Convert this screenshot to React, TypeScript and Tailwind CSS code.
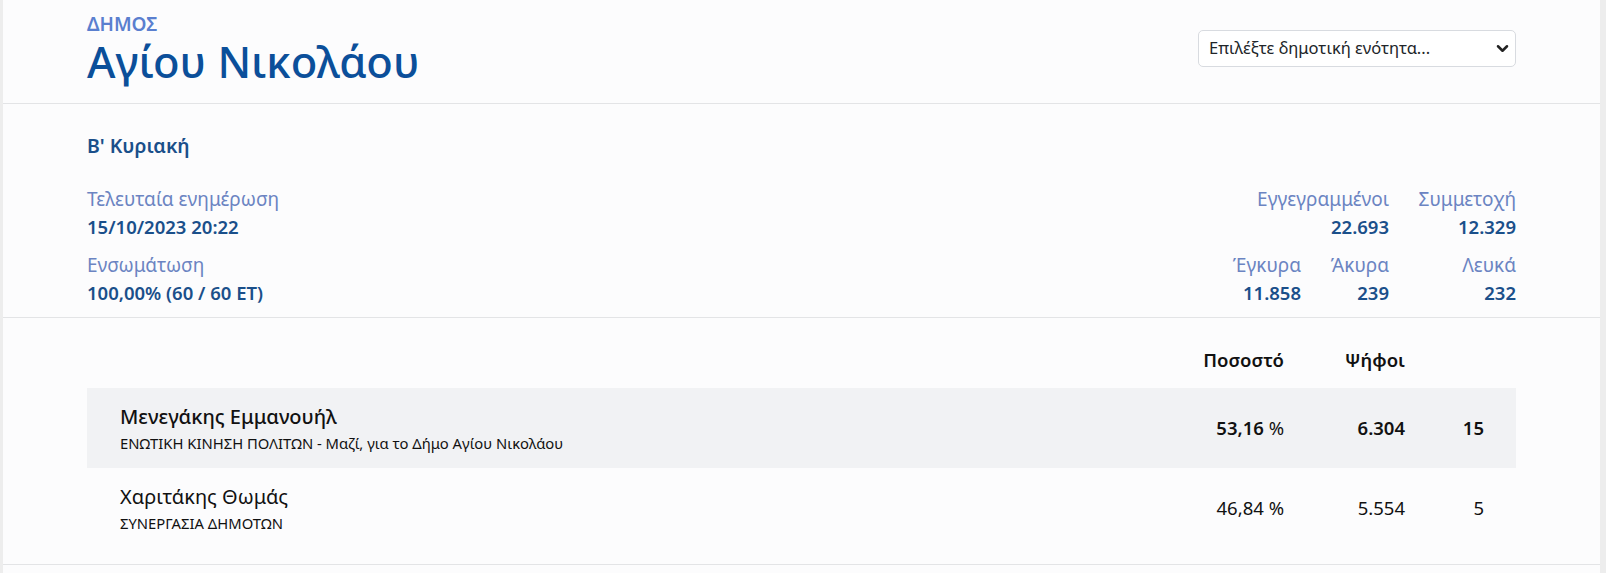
import React from "react"

const stats = [
  { label: "Έγκυρα", value: "11.858" },
  { label: "Άκυρα", value: "239" },
  { label: "Λευκά", value: "232" },
]

const candidates = [
  { name: "Μενεγάκης Εμμανουήλ", party: "ΕΝΩΤΙΚΗ ΚΙΝΗΣΗ ΠΟΛΙΤΩΝ - Μαζί, για το Δήμο Αγίου Νικολάου", pct: "53,16", votes: "6.304", seats: "15", winner: true },
  { name: "Χαριτάκης Θωμάς", party: "ΣΥΝΕΡΓΑΣΙΑ ΔΗΜΟΤΩΝ", pct: "46,84", votes: "5.554", seats: "5", winner: false },
]

const Stat = ({ label, value }: { label: string; value: string }) => (
  <div>
    <div className="text-[19px] leading-[28px] text-[#6b84c2]">{label}</div>
    <div className="text-[18.5px] leading-[27px] font-semibold text-[#1a4f8a]">{value}</div>
  </div>
)

const App = () => {
  return (
    <div className="min-h-[573px] bg-[#ededed] pl-[3px] pr-[6px] font-['Noto_Sans',sans-serif]">
      <div className="bg-[#fcfcfd] min-h-[573px]">
        {/* header */}
        <div className="h-[104px] border-b border-[#e3e4e6] flex items-start justify-between pl-[84px] pr-[84px]">
          <div className="pt-[14px]">
            <div className="text-[19px] leading-[20px] font-semibold text-[#5a7fcf]">ΔΗΜΟΣ</div>
            <div className="text-[43.5px] leading-[50px] font-medium text-[#0b4f9a] mt-[2px]">Αγίου Νικολάου</div>
          </div>
          <div className="relative mt-[30px] w-[318px] h-[37px]">
            <select className="appearance-none w-full h-full border border-[#d8dbe0] rounded-[5px] bg-white pl-[10px] pr-8 text-[16.5px] text-[#212529] outline-none">
              <option>Επιλέξτε δημοτική ενότητα...</option>
            </select>
            <svg className="absolute right-[7px] top-[14px] pointer-events-none" width="13" height="9" viewBox="0 0 14 10">
              <path d="M2 2.5l5 5 5-5" fill="none" stroke="#222" strokeWidth="2.8" strokeLinecap="round" strokeLinejoin="round" />
            </svg>
          </div>
        </div>

        {/* summary */}
        <div className="h-[214px] border-b border-[#e3e4e6] pl-[84px] pr-[84px] pt-[29px]">
          <div className="text-[19.5px] leading-[26px] font-semibold text-[#1a4f8a]">Β' Κυριακή</div>
          <div className="flex justify-between mt-[26px]">
            <div className="flex flex-col gap-[11px]">
              <Stat label="Τελευταία ενημέρωση" value="15/10/2023 20:22" />
              <Stat label="Ενσωμάτωση" value="100,00% (60 / 60 ΕΤ)" />
            </div>
            <div className="grid grid-cols-[auto_88px_127px] gap-y-[11px] text-right">
              <div className="col-span-2">
                <Stat label="Εγγεγραμμένοι" value="22.693" />
              </div>
              <Stat label="Συμμετοχή" value="12.329" />
              {stats.map((s) => (
                <Stat key={s.label} label={s.label} value={s.value} />
              ))}
            </div>
          </div>
        </div>

        {/* results */}
        <div className="border-b border-[#e3e4e6] pl-[84px] pr-[84px] pt-[28px] pb-[16px]">
          <div className="grid grid-cols-[1fr_140px_121px_79px] pr-[32px] h-[42px] text-[18.5px] font-semibold text-[#111]">
            <div></div>
            <div className="text-right">Ποσοστό</div>
            <div className="text-right">Ψήφοι</div>
            <div></div>
          </div>
          {candidates.map((c) => (
            <div
              key={c.name}
              className={`grid grid-cols-[1fr_140px_121px_79px] items-center pl-[33px] pr-[32px] h-[80px] ${c.winner ? "bg-[#f1f2f4]" : ""}`}
            >
              <div>
                <div className={`text-[20px] leading-[26px] text-[#111] ${c.winner ? "font-medium" : ""}`}>{c.name}</div>
                <div className="text-[14.8px] leading-[20px] text-[#111] mt-[3px]">{c.party}</div>
              </div>
              <div className={`text-right text-[18.5px] text-[#111] ${c.winner ? "font-semibold" : ""}`}>
                {c.pct} <span className="font-normal">%</span>
              </div>
              <div className={`text-right text-[18.5px] text-[#111] ${c.winner ? "font-semibold" : ""}`}>{c.votes}</div>
              <div className={`text-right text-[18.5px] text-[#111] ${c.winner ? "font-semibold" : ""}`}>{c.seats}</div>
            </div>
          ))}
        </div>
      </div>
    </div>
  )
}

export default App
